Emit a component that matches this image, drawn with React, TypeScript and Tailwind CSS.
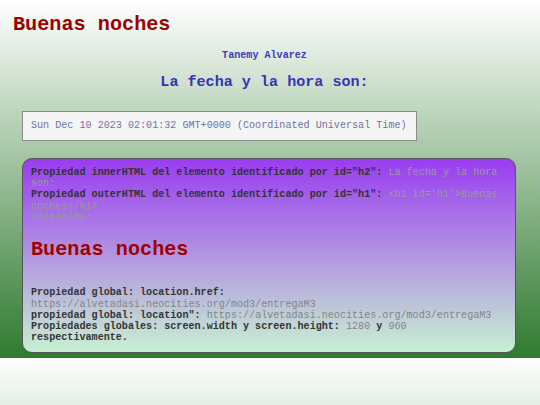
export default function App() {
  const mono = { fontFamily: '"Liberation Mono", "Courier New", monospace' };
  return (
    <div
      style={mono}
      className="min-h-[405px] bg-[linear-gradient(to_bottom,#ffffff,#2f7a2f)] bg-[length:100%_358px] bg-repeat-y"
    >
      <div className="h-[358px] overflow-hidden pt-[14px]">
        <h1 className="pl-[13px] text-[20.2px] font-bold leading-[22.9px] text-[#990000]">Buenas noches</h1>

        <div className="pl-[8px] pr-[19px] text-center">
          <p className="mt-[13px] text-[10.1px] font-bold leading-[11.4px] text-[#3a3ac0]">Tanemy Alvarez</p>
          <h2 className="mt-[13px] text-[15.1px] font-bold leading-[17.1px] text-[#3535b5]">La fecha y la hora son:</h2>
        </div>

        <div className="ml-[22px] mt-[20px] w-[395px] border border-[#8a8a8a] bg-[#f5f5f5] py-[8px] pl-[8px] text-[10.1px] leading-[11.4px] text-[#7272a8]">
          Sun Dec 10 2023 02:01:32 GMT+0000 (Coordinated Universal Time)
        </div>

        <div className="ml-[22px] mt-[17px] w-[494px] rounded-[10px] border border-[#555555] bg-[linear-gradient(to_bottom,#9a3cf0,#c8f0d2)] pb-[8px] pl-[8px] pr-[9px] pt-[8px] text-[10.1px] leading-[11.3px] text-[#9a9a9a]">
          <p>
            <b className="text-[#333333]">Propiedad innerHTML del elemento identificado por id="h2":</b> La fecha y la hora son:
          </p>
          <p>
            <b className="text-[#333333]">Propiedad outerHTML del elemento identificado por id="h1":</b> {"<h1 id='h1'>Buenas noches</h1>"}
          </p>
          <p>contenido:</p>
          <h1 className="mt-[16px] text-[20.2px] font-bold leading-[22.9px] text-[#a00000]">Buenas noches</h1>
          <div className="mt-[25px] font-bold text-[#333333]">
            <p>
              Propiedad global: location.href: <span className="font-normal text-[#858585]">https://alvetadasi.neocities.org/mod3/entregaM3</span>
            </p>
            <p>
              propiedad global: location": <span className="font-normal text-[#858585]">https://alvetadasi.neocities.org/mod3/entregaM3</span>
            </p>
            <p>
              Propiedades globales: screen.width y screen.height: <span className="font-normal text-[#858585]">1280</span> y{' '}
              <span className="font-normal text-[#858585]">960</span> respectivamente.
            </p>
          </div>
        </div>
      </div>
    </div>
  );
}
